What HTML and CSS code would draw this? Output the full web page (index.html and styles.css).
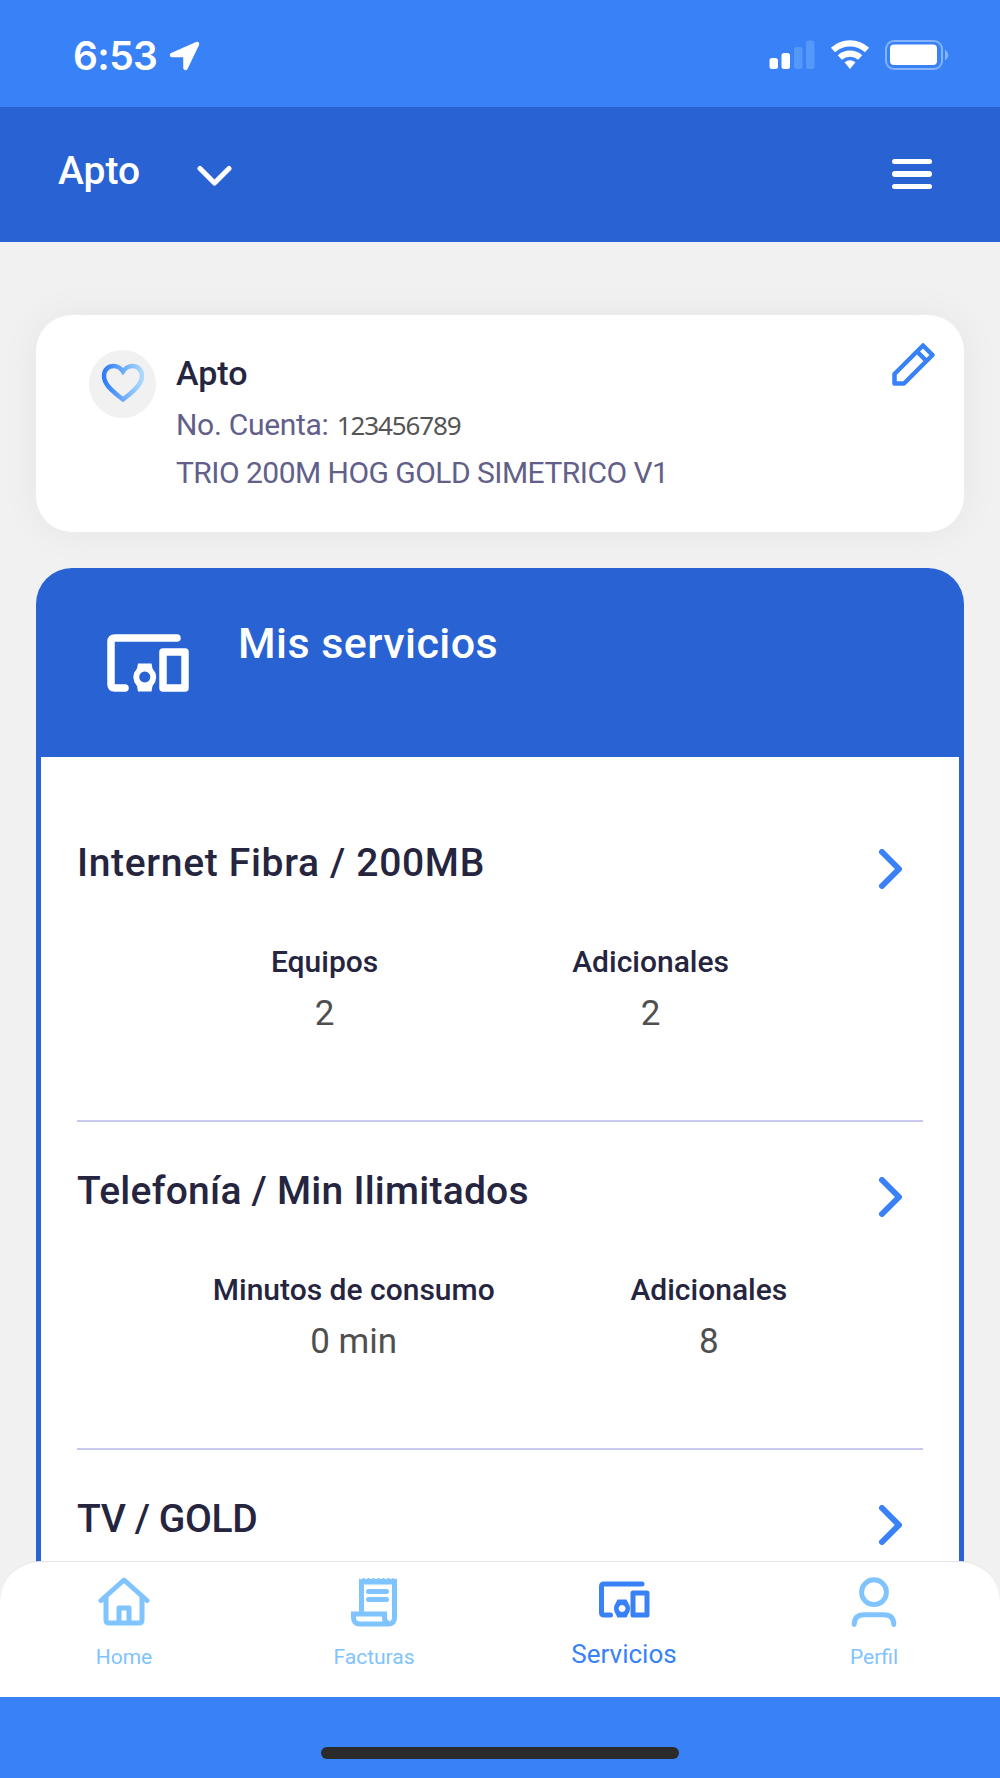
FILE: index.html
```html
<!DOCTYPE html>
<html lang="es">
<head>
  <meta charset="UTF-8">
  <meta name="viewport" content="width=device-width, initial-scale=1.0">
  <title>Mis servicios</title>
  <link rel="stylesheet" href="styles.css">
</head>
<body>
  <div class="app">
    <div class="status">
      <span class="time">6:53</span>
      <svg class="location" width="32" height="32" viewBox="0 0 32 32"><path d="M4 15 29 4 17.500 28V15z" fill="#fff" stroke="#fff" stroke-width="4.500" stroke-linejoin="round"/></svg>
      <svg class="signal" width="46" height="30" viewBox="0 0 46 30" fill="#fff">
        <rect x="0.500" y="18" width="8.500" height="11" rx="2.500"/>
        <rect x="12.500" y="13" width="8.500" height="16" rx="2.500"/>
        <rect x="25" y="7" width="8.500" height="22" rx="2.500" fill="#5498fa"/>
        <rect x="37" y="0.500" width="8.500" height="28.500" rx="2.500" fill="#5498fa"/>
      </svg>
      <svg class="wifi" width="40" height="30" viewBox="0 0 40 30" fill="none" stroke="#fff" stroke-width="6.200">
        <path d="M3 10a25 25 0 0 1 34 0"/>
        <path d="M9.800 17.500a15.500 15.500 0 0 1 20.400 0"/>
        <path d="M14.500 22.300a9 9 0 0 1 11 0L20 29z" fill="#fff" stroke="none"/>
      </svg>
      <svg class="battery" width="64" height="30" viewBox="0 0 64 30">
        <rect x="1" y="1" width="56" height="28" rx="8" fill="none" stroke="#83b3fb" stroke-width="2"/>
        <rect x="5" y="4.500" width="47" height="20.500" rx="4" fill="#fff"/>
        <path d="M60 9.500q7 5.500 0 11z" fill="#83b3fb"/>
      </svg>
    </div>

    <header class="topbar">
      <span class="place">Apto</span>
      <svg class="arrow" width="36" height="22" viewBox="0 0 36 22"><path d="M3 3.500 17.500 18 32 3.500" fill="none" stroke="#fff" stroke-width="5" stroke-linecap="round" stroke-linejoin="round"/></svg>
      <div class="menu"><i></i><i></i><i></i></div>
    </header>

    <main class="content">
      <section class="account">
        <div class="heart">
          <svg width="44" height="40" viewBox="0 0 44 40">
            <defs><linearGradient id="hg"><stop offset="0" stop-color="#2f7df8"/><stop offset="1" stop-color="#a9d9ff"/></linearGradient></defs>
            <path d="M22 36.500C8.500 26 3 20 3 13 3 6.500 7.500 3 12.500 3c4.500 0 7.500 2.500 9.500 5.500C24 5.500 27 3 31.500 3 36.500 3 41 6.500 41 13c0 7-5.500 13-19 23.500z" fill="none" stroke="url(#hg)" stroke-width="4.500"/>
          </svg>
        </div>
        <div class="info">
          <h2>Apto</h2>
          <p class="number">No. Cuenta: <span>123456789</span></p>
          <p class="plan">TRIO 200M HOG GOLD SIMETRICO V1</p>
        </div>
        <svg class="pencil" width="43" height="43" viewBox="0 0 43 43" fill="none" stroke="#3881f7" stroke-width="4.500" stroke-linejoin="round"><path d="M2.500 40.500V31L31 2.500 40.500 12 12 40.500zM25 8.500l9.500 9.500"/></svg>
      </section>

      <section class="services">
        <div class="services-head">
          <svg class="devices" width="82" height="58" viewBox="0 0 82 58" fill="none" stroke="#fff" stroke-width="7.500" stroke-linecap="round" stroke-linejoin="round">
            <path d="M70 4H8Q4 4 4 8V50Q4 54 8 54H18"/>
            <path d="M56 18H78V54H56z"/>
            <path d="M31 29.500H44.500L45.500 34.500Q53 43 45.500 52L44.500 57.500H31L30 52Q22.500 43 30 34.500zM37.700 37.500a5.500 5.500 0 1 0 .1 0z" fill="#fff" fill-rule="evenodd" stroke="none"/>
          </svg>
          <h1>Mis servicios</h1>
        </div>

        <div class="services-list">
          <article class="service">
            <div class="row">
              <h3 class="net">Internet Fibra / 200MB</h3>
              <svg class="next" width="24" height="40" viewBox="0 0 24 40"><path d="M3 3 20 20 3 37"/></svg>
            </div>
            <div class="stats">
              <div class="stat"><b>Equipos</b><span>2</span></div>
              <div class="stat"><b>Adicionales</b><span>2</span></div>
            </div>
          </article>

          <article class="service">
            <div class="row">
              <h3 class="tel">Telefonía / Min Ilimitados</h3>
              <svg class="next" width="24" height="40" viewBox="0 0 24 40"><path d="M3 3 20 20 3 37"/></svg>
            </div>
            <div class="stats">
              <div class="stat"><b>Minutos de consumo</b><span>0 min</span></div>
              <div class="stat"><b>Adicionales</b><span>8</span></div>
            </div>
          </article>

          <article class="service">
            <div class="row">
              <h3 class="tv">TV / GOLD</h3>
              <svg class="next" width="24" height="40" viewBox="0 0 24 40"><path d="M3 3 20 20 3 37"/></svg>
            </div>
          </article>
        </div>
      </section>
    </main>

    <nav class="tabs">
      <a class="tab">
        <svg width="52" height="50" viewBox="0 0 52 50" fill="none" stroke="currentColor" stroke-width="5" stroke-linecap="round" stroke-linejoin="round">
          <path d="M3 23.500 26 3 49 23.500M8 20V43Q8 46 11 46H41Q44 46 44 43V20M21 45V31H31V45"/>
        </svg>
        <span>Home</span>
      </a>
      <a class="tab">
        <svg width="46" height="50" viewBox="0 0 46 50" fill="none" stroke="currentColor" stroke-width="5">
          <path d="M10.500 35V5H43.500V40.500Q43.500 47 37 47H9Q2.500 47 2.500 40.500V37H33.500V40.500Q33.500 46 38 46" />
          <path d="M8 4V1.500l2.500 1q2-3 4.500 0 2.500-3 5 0 2.500-3 5 0 2.500-3 5 0 2.500-3 5 0 2.500-3 5 0 2.500-3 4 0l2-1V4z" fill="currentColor" stroke="none"/>
          <path d="M17.500 14.500H35.500M17.500 22.500H35.500" stroke-linecap="round"/>
        </svg>
        <span>Facturas</span>
      </a>
      <a class="tab active">
        <svg width="52" height="50" viewBox="0 0 52 50" fill="none" stroke="currentColor" stroke-width="5" stroke-linecap="round" stroke-linejoin="round">
          <path d="M44 7H6Q3.500 7 3.500 9.500V35.500Q3.500 38 6 38H12.500"/>
          <path d="M35 16H49V38H35z"/>
          <path d="M19.500 22.500H28.500L30 25.500Q34 31.500 30 37.500L28.500 40.500H19.500L18 37.500Q14 31.500 18 25.500zM24 28a3.500 3.500 0 1 0 .1 0z" fill="currentColor" fill-rule="evenodd" stroke="none"/>
        </svg>
        <span>Servicios</span>
      </a>
      <a class="tab">
        <svg width="46" height="51" viewBox="0 0 46 51" fill="none" stroke="currentColor" stroke-width="5" stroke-linecap="round">
          <circle cx="23" cy="15.500" r="12.700"/>
          <path d="M2.800 48.500Q2.800 38.500 13 38.500H33Q43.200 38.500 43.200 48.500"/>
        </svg>
        <span>Perfil</span>
      </a>
    </nav>

    <div class="bottom"><div class="indicator"></div></div>
  </div>
</body>
</html>
```

FILE: styles.css
```css
*{margin: 0;padding: 0;box-sizing: border-box;}
body{background: #f1f1f1;font-family: Roboto, "Liberation Sans", sans-serif;}
svg{display: block;flex: none;}
.app{width: 1000px;height: 1778px;overflow: hidden;display: flex;flex-direction: column;}

/* status bar */
.status{flex: none;height: 106.5px;padding: 40px 51px 0 73px;display: flex;align-items: flex-start;background: #3881f7;color: #fff;}
.time{width: 95px;font-family: Inter, sans-serif;font-size: 39px;font-weight: 600;line-height: 31px;letter-spacing: -.6px;}
.signal{margin-left: 569px;}
.wifi{margin-left: 15px;}
.battery{margin-left: 15px;}

/* top bar */
.topbar{flex: none;height: 135.5px;padding: 0 68px 0 58px;display: flex;align-items: flex-start;background: #2963d3;color: #fff;}
.place{width: 139px;padding-top: 44.5px;font-size: 39px;font-weight: 500;line-height: 40px;}
.arrow{margin-top: 58.5px;}
.menu{margin: 52px 0 0 auto;width: 40px;display: grid;gap: 7px;}
.menu i{height: 5.5px;border-radius: 3px;background: #fff;}

.content{flex: 1;min-height: 0;padding: 73px 36px 0;}

/* account card */
.account{height: 217px;padding: 35px 29px 0 53px;display: flex;align-items: flex-start;background: #fff;border-radius: 36px;box-shadow: 0 0 40px rgba(0,0,0,.05);}
.heart{width: 67px;height: 68px;padding-top: 13px;display: flex;justify-content: center;align-items: flex-start;border-radius: 50%;background: #f1f1f1;}
.info{flex: 1;padding-left: 20px;}
.info h2{padding-top: 3px;font-size: 34px;font-weight: 500;line-height: 40px;color: #26253f;}
.info p{font-size: 30px;line-height: 48px;color: #626089;white-space: nowrap;}
.info .number{padding-top: 8px;letter-spacing: -0.3px;}
.info .plan{letter-spacing: -0.53px;}
.number span{margin-left: 1px;font-family: "Noto Sans", sans-serif;font-size: 26px;letter-spacing: -1.1px;color: #555;}
.pencil{margin-top: -7px;}

/* services card */
.services{margin-top: 36px;height: 1100px;padding: 0 5px;border-radius: 36px;background: #2963d3;overflow: hidden;}
.services-head{height: 189px;padding: 66px 66px 0;display: flex;align-items: flex-start;color: #fff;}
.services-head h1{margin: -16px 0 0 49px;font-size: 43px;font-weight: 500;line-height: 50px;letter-spacing: .45px;}
.services-list{padding-top: 37px;background: #fff;}
.service{height: 328px;margin: 0 36px;padding-top: 55px;border-bottom: 2px solid #c9c9ee;}
.row{display: flex;justify-content: space-between;padding-right: 20px;}
.row h3{font-size: 39px;font-weight: 500;line-height: 40px;color: #26253f;margin-top: -6px;white-space: nowrap;}
.row .net{letter-spacing: .68px;}
.row .tel{letter-spacing: .24px;}
.row .tv{letter-spacing: -.4px;}
.next path{fill: none;stroke: #3881f7;stroke-width: 6;stroke-linecap: round;stroke-linejoin: round;}
.stats{margin-top: 51px;display: flex;justify-content: space-evenly;}
.stat{display: flex;flex-direction: column;align-items: center;}
.stat b{font-size: 30px;font-weight: 500;line-height: 44px;color: #26253f;}
.stat span{padding-top: 2px;font-size: 35px;line-height: 56px;color: #4f4f4f;}

/* bottom tabs */
.tabs{flex: none;position: relative;height: 136px;display: grid;grid-template-columns: repeat(4, 1fr);background: #fff;border-top: 1px solid #e6e6e8;border-radius: 40px 40px 0 0;}
.tab{display: flex;flex-direction: column;align-items: center;padding: 15px 2px 0 0;color: #7fc3ff;}
.tab svg{height: 50px;}
.tab span{margin-top: 15px;font-size: 21px;line-height: 30px;}
.tab.active{color: #3881f7;}
.tab.active span{margin-top: 12px;font-size: 26px;}

.bottom{flex: none;height: 81px;padding-top: 50px;background: #3881f7;}
.indicator{width: 358px;height: 12px;margin: 0 auto;border-radius: 6px;background: #2b2b2b;}
```
